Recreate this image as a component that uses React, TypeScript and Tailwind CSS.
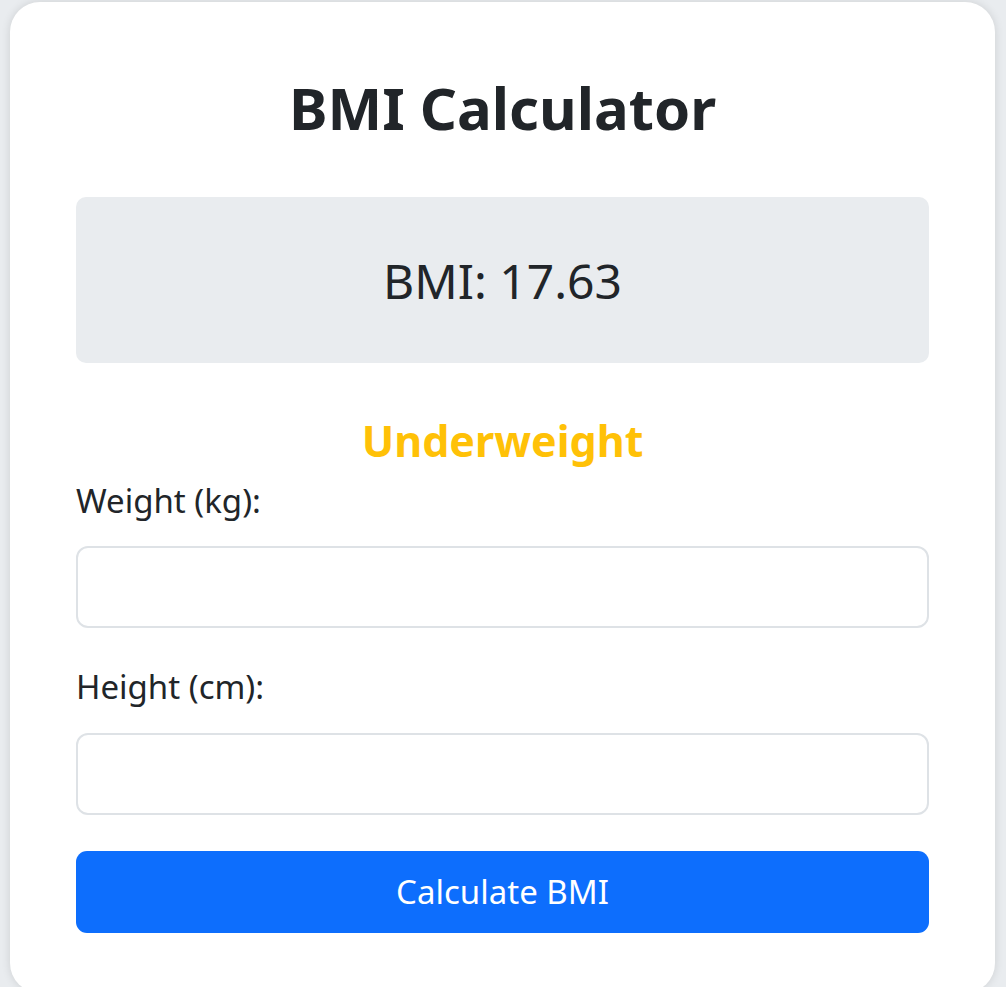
import React from "react";

export default function App() {
  return (
    <div
      className="min-h-screen bg-[#e9ecef] pt-[2px] pl-[10px] pr-[11px]"
      style={{ fontFamily: '"Noto Sans", "Open Sans", sans-serif' }}
    >
      <div className="flex flex-col rounded-[30px] bg-white px-[66px] pt-[70px] pb-[60px] text-[#212529] shadow-[0_0_10px_rgba(0,0,0,0.12)]">
        <h1 className="h-[72px] text-center text-[58px] font-bold leading-[72px]">
          BMI Calculator
        </h1>
        <div className="mt-[53px] flex h-[166px] items-center justify-center rounded-[10px] bg-[#e9ecef] pt-[2px] text-[48px] leading-[56px]">
          BMI: 17.63
        </div>
        <div className="mt-[54px] h-[48px] text-center text-[43px] font-bold leading-[48px] text-[#ffc107]">
          Underweight
        </div>
        <label className="mt-[16px] block h-[40px] text-[33px] leading-[40px]">
          Weight (kg):
        </label>
        <input
          type="text"
          className="mt-[25px] block h-[82px] w-full rounded-[12px] border-2 border-[#dee2e6] bg-white px-4 outline-none"
        />
        <label className="mt-[39px] block h-[40px] text-[33px] leading-[40px]">
          Height (cm):
        </label>
        <input
          type="text"
          className="mt-[26px] block h-[82px] w-full rounded-[12px] border-2 border-[#dee2e6] bg-white px-4 outline-none"
        />
        <button className="mt-[36px] flex h-[82px] w-full items-center justify-center rounded-[11px] bg-[#0d6efd] text-[33px] leading-[40px] text-white">
          Calculate BMI
        </button>
      </div>
    </div>
  );
}
